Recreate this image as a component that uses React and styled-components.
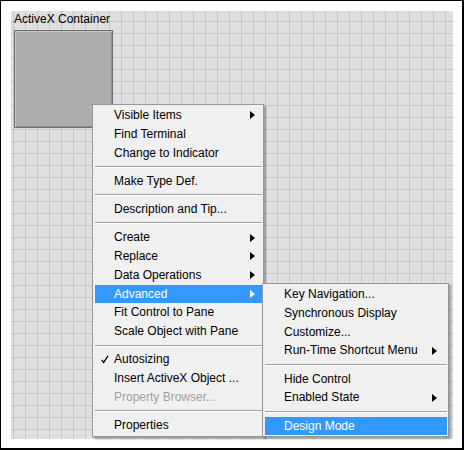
import React from "react";
import styled, { createGlobalStyle } from "styled-components";

const GlobalStyle = createGlobalStyle`
  html, body {
    margin: 0;
    padding: 0;
    background: #ffffff;
  }
  body {
    font-family: "Liberation Sans", Arial, sans-serif;
    font-size: 12px;
  }
`;

const Frame = styled.div`
  position: relative;
  box-sizing: border-box;
  width: 464px;
  height: 450px;
  background: #ffffff;
  border-style: solid;
  border-color: #000000;
  border-width: 1px 2px 2px 1px;
  padding: 10px 9px 9px 10px;
`;

const Canvas = styled.div`
  box-sizing: border-box;
  width: 100%;
  height: 100%;
  display: flex;
  flex-direction: column;
  align-items: flex-start;
  padding: 1px 0 0 3px;
  background-color: #dfdfdf;
  background-image: linear-gradient(to right, #c6c6c6 1px, transparent 1px),
    linear-gradient(to bottom, #c6c6c6 1px, transparent 1px);
  background-size: 12px 12px;
  background-position: 2px 10px;
`;

const Label = styled.div`
  line-height: 14px;
  color: #000000;
`;

const Container = styled.div`
  box-sizing: border-box;
  width: 99px;
  height: 98px;
  margin-top: 4px;
  background: #adadad;
  border: 1px solid #6f6f6f;
  box-shadow: inset 1px 1px 0 #c4c4c4, inset -1px -1px 0 #8f8f8f;
`;

const Menu = styled.div`
  position: absolute;
  left: ${(p) => p.$left}px;
  top: ${(p) => p.$top}px;
  width: ${(p) => p.$width}px;
  box-sizing: border-box;
  padding: 1px 1px 1px 2px;
  background: #f0f0f0;
  border: 1px solid #979797;
  box-shadow: 2px 2px 2px rgba(0, 0, 0, 0.3);
`;

const Row = styled.div`
  display: flex;
  align-items: center;
  height: 18.8px;
  line-height: 18.8px;
  padding-right: ${(p) => p.$gap}px;
  white-space: nowrap;
  color: ${(p) => (p.$active ? "#ffffff" : p.$disabled ? "#a0a0a0" : "#000000")};
  background: ${(p) => (p.$active ? "#3399ff" : "transparent")};
`;

const CheckCell = styled.span`
  display: flex;
  align-items: center;
  justify-content: center;
  width: 19px;
  height: 100%;
  flex-shrink: 0;
`;

const Arrow = styled.span`
  margin-left: auto;
  width: 0;
  height: 0;
  border-left: 5px solid currentColor;
  border-top: 4px solid transparent;
  border-bottom: 4px solid transparent;
`;

const Separator = styled.div`
  height: 9.4px;
  display: flex;
  align-items: center;

  &::after {
    content: "";
    display: block;
    width: 100%;
    height: 0;
    border-top: 1px solid #a0a0a0;
    border-bottom: 1px solid #ffffff;
  }
`;

const Check = () => (
  <svg width="8" height="9" viewBox="0 0 8 9">
    <polyline
      points="0.8,4.8 2.6,7.6 7,0.8"
      fill="none"
      stroke="#000"
      strokeWidth="1.3"
    />
  </svg>
);

const mainItems = [
  { label: "Visible Items", sub: true },
  { label: "Find Terminal" },
  { label: "Change to Indicator" },
  "sep",
  { label: "Make Type Def." },
  "sep",
  { label: "Description and Tip..." },
  "sep",
  { label: "Create", sub: true },
  { label: "Replace", sub: true },
  { label: "Data Operations", sub: true },
  { label: "Advanced", sub: true, active: true },
  { label: "Fit Control to Pane" },
  { label: "Scale Object with Pane" },
  "sep",
  { label: "Autosizing", checked: true },
  { label: "Insert ActiveX Object ..." },
  { label: "Property Browser...", disabled: true },
  "sep",
  { label: "Properties" },
];

const advancedItems = [
  { label: "Key Navigation..." },
  { label: "Synchronous Display" },
  { label: "Customize..." },
  { label: "Run-Time Shortcut Menu", sub: true },
  "sep",
  { label: "Hide Control" },
  { label: "Enabled State", sub: true },
  "sep",
  { label: "Design Mode", active: true },
];

const MenuList = ({ items, gap, ...rest }) => (
  <Menu {...rest}>
    {items.map((item, i) =>
      item === "sep" ? (
        <Separator key={i} />
      ) : (
        <Row
          key={item.label}
          $gap={gap}
          $active={item.active}
          $disabled={item.disabled}
        >
          <CheckCell>{item.checked && <Check />}</CheckCell>
          {item.label}
          {item.sub && <Arrow />}
        </Row>
      )
    )}
  </Menu>
);

export default function App() {
  return (
    <>
      <GlobalStyle />
      <Frame>
        <Canvas>
          <Label>ActiveX Container</Label>
          <Container />
        </Canvas>
        <MenuList items={mainItems} gap={7} $left={91} $top={103} $width={172} />
        <MenuList
          items={advancedItems}
          gap={10}
          $left={261}
          $top={282}
          $width={187}
        />
      </Frame>
    </>
  );
}
